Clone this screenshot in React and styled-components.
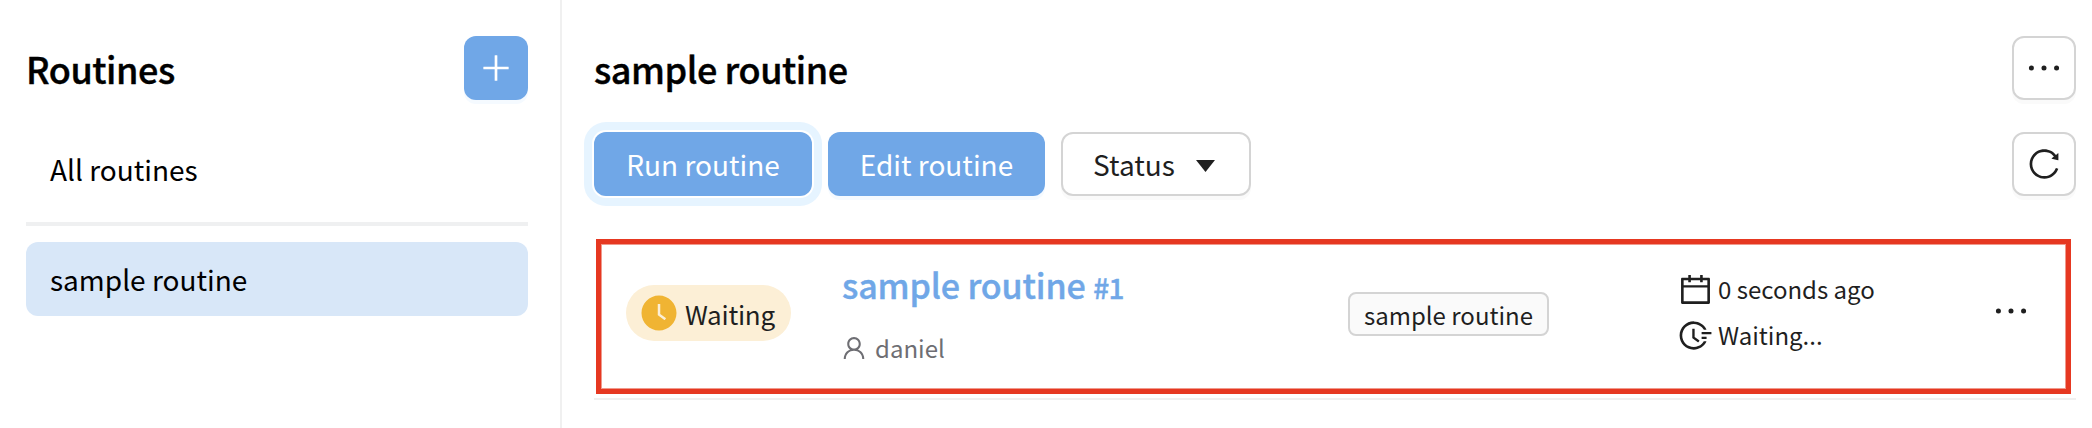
import React from 'react';
import styled, { createGlobalStyle, css } from 'styled-components';
import {
  AiOutlinePlus,
  AiOutlineReload,
  AiOutlineEllipsis,
  AiOutlineUser,
  AiOutlineCalendar,
  AiOutlineFieldTime,
  AiFillClockCircle,
} from 'react-icons/ai';

const GlobalStyle = createGlobalStyle`
  * { box-sizing: border-box; }
  body {
    margin: 0;
    background: #fff;
    color: #000;
    font-family: "Noto Sans CJK KR", "Noto Sans CJK JP", sans-serif;
    font-size: 28px;
    overflow: hidden;
  }
  svg { display: block; flex: none; }
`;

const Page = styled.div`
  display: flex;
  height: 428px;
`;

const Sidebar = styled.aside`
  width: 562px;
  padding: 36px 32px 0 26px;
  border-right: 2px solid #f0f0f0;
`;

const Header = styled.header`
  display: flex;
  align-items: center;
  justify-content: space-between;
  height: 64px;
`;

const Title = styled.h1`
  margin: 0;
  font-size: 36px;
  font-weight: 500;
  letter-spacing: -0.46px;
  line-height: 64px;
  -webkit-text-stroke: 0.4px currentColor;
`;

const Button = styled.button`
  display: flex;
  align-items: center;
  justify-content: center;
  width: ${(p) => p.$width || 64}px;
  height: 64px;
  padding: 0;
  border-radius: 12px;
  font: inherit;
  line-height: 64px;
  ${(p) =>
    p.$primary
      ? css`
          border: none;
          color: #fff;
          background: #70a7e7;
          box-shadow: 0 4px 0 #f5faff;
        `
      : css`
          border: 2px solid #d4d4d4;
          color: #1f1f1f;
          background: #fff;
          box-shadow: 0 4px 0 #fafafa;
        `}
  ${(p) =>
    p.$focused &&
    css`
      box-shadow: 0 0 0 2px #fff, 0 0 0 10px #e6f4ff;
    `}
`;

const Menu = styled.nav`
  display: flex;
  flex-direction: column;
  margin-top: 32px;
`;

const MenuItem = styled.a`
  height: 74px;
  padding-left: 24px;
  border-radius: 12px;
  line-height: 74px;
  background: ${(p) => (p.$active ? '#d8e7f8' : 'transparent')};
`;

const Divider = styled.hr`
  width: 100%;
  height: 4px;
  margin: 16px 0;
  border: none;
  background: #eff0f1;
`;

const Main = styled.main`
  flex: 1;
  padding: 36px 16px 0 32px;
`;

const Toolbar = styled.div`
  display: flex;
  gap: 16px;
  margin-top: 32px;

  > :last-child { margin-left: auto; }
`;

const Caret = styled.svg`
  margin: 4px 4px 0 21px;
`;

const List = styled.div`
  margin-top: 43px;
  padding: 0 5px 4px 2px;
  border-bottom: 2px solid #f0f0f0;
`;

const Row = styled.div`
  display: grid;
  grid-template-columns: 216px 506px 329px 310px 1fr;
  height: 155px;
  padding-left: 25px;
  border: 5px solid #e63821;
  box-shadow: inset 0 0 0 1px #f0998c;
`;

const StatusCell = styled.div`
  padding-top: 41px;
`;

const Pill = styled.span`
  display: flex;
  align-items: center;
  gap: 6px;
  width: 165px;
  height: 56px;
  padding-left: 13px;
  border-radius: 28px;
  background: #fcefd6;
  color: #1f1f1f;
  font-size: 26px;
  letter-spacing: -0.25px;

  svg { color: #f0b433; }
`;

const NameCell = styled.div`
  display: flex;
  flex-direction: column;
`;

const RunLink = styled.a`
  margin-top: 17px;
  color: #70a7e7;
  font-size: 34px;
  font-weight: 500;
  letter-spacing: -0.14px;
  line-height: 48px;
  -webkit-text-stroke: 0.4px currentColor;

  small {
    font-size: 28px;
    letter-spacing: -0.6px;
  }
`;

const Author = styled.span`
  display: flex;
  align-items: center;
  gap: 7px;
  margin: 19px 0 0 -2px;
  color: #6e6e73;
  font-size: 24px;
  line-height: 36px;
`;

const TagCell = styled.div`
  padding-top: 48px;
`;

const Tag = styled.span`
  display: flex;
  align-items: center;
  justify-content: center;
  width: 201px;
  height: 44px;
  border: 2px solid #d4d4d4;
  border-radius: 8px;
  background: #fafafa;
  color: #1f1f1f;
  font-size: 24px;
`;

const TimeCell = styled.div`
  display: flex;
  flex-direction: column;
  gap: 10px;
  padding-top: 27px;
`;

const TimeLine = styled.span`
  display: flex;
  align-items: center;
  gap: 4px;
  height: 36px;
  color: #1f1f1f;
  font-size: 24px;
  line-height: 36px;
`;

const MoreCell = styled.div`
  padding: 44px 0 0 1px;
  color: #1f1f1f;
`;

export default function App() {
  return (
    <Page>
      <GlobalStyle />
      <Sidebar>
        <Header>
          <Title>Routines</Title>
          <Button $primary aria-label="Add routine">
            <AiOutlinePlus size={36} />
          </Button>
        </Header>
        <Menu>
          <MenuItem>All routines</MenuItem>
          <Divider />
          <MenuItem $active>sample routine</MenuItem>
        </Menu>
      </Sidebar>
      <Main>
        <Header>
          <Title>sample routine</Title>
          <Button aria-label="More">
            <AiOutlineEllipsis size={46} />
          </Button>
        </Header>
        <Toolbar>
          <Button $primary $focused $width={218}>Run routine</Button>
          <Button $primary $width={217}>Edit routine</Button>
          <Button $width={190}>
            Status
            <Caret width="19" height="12" viewBox="0 0 19 12">
              <path d="M0 0h19L9.500 12z" fill="currentColor" />
            </Caret>
          </Button>
          <Button aria-label="Reload">
            <AiOutlineReload size={36} />
          </Button>
        </Toolbar>
        <List>
          <Row>
            <StatusCell>
              <Pill>
                <AiFillClockCircle size={40} />
                Waiting
              </Pill>
            </StatusCell>
            <NameCell>
              <RunLink>
                sample routine <small>#1</small>
              </RunLink>
              <Author>
                <AiOutlineUser size={28} />
                daniel
              </Author>
            </NameCell>
            <TagCell>
              <Tag>sample routine</Tag>
            </TagCell>
            <TimeCell>
              <TimeLine>
                <AiOutlineCalendar size={37} />
                0 seconds ago
              </TimeLine>
              <TimeLine>
                <AiOutlineFieldTime size={37} />
                Waiting...
              </TimeLine>
            </TimeCell>
            <MoreCell>
              <AiOutlineEllipsis size={46} />
            </MoreCell>
          </Row>
        </List>
      </Main>
    </Page>
  );
}
